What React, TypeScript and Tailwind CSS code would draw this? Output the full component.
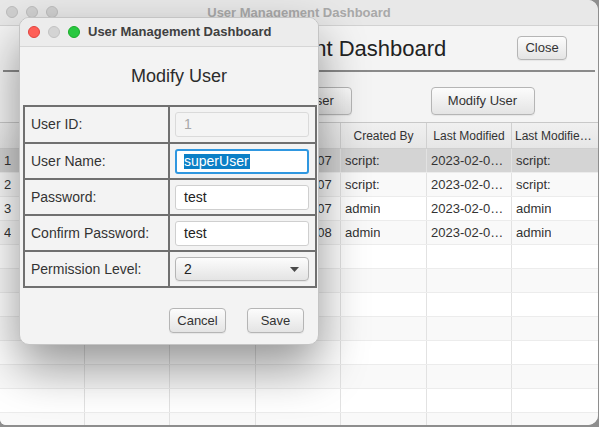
import React from 'react';

const rows = [
    { id: '1', name: 'superUser', pw: 'test', created: '2023-02-07', by: 'script:', mod: '2023-02-07 10:14', modBy: 'script:' },
    { id: '2', name: 'admin', pw: 'admin', created: '2023-02-07', by: 'script:', mod: '2023-02-07 10:14', modBy: 'script:' },
    { id: '3', name: 'jsmith', pw: 'pass', created: '2023-02-07', by: 'admin', mod: '2023-02-07 11:02', modBy: 'admin' },
    { id: '4', name: 'mdoe', pw: 'pass', created: '2023-02-08', by: 'admin', mod: '2023-02-08 09:30', modBy: 'admin' },
];

const headers = ['ID', 'User Name', 'Password', 'Created', 'Created By', 'Last Modified', 'Last Modified By'];

const btn = 'rounded-[4px] border border-[#b5b5b5] bg-linear-to-b from-[#fcfcfc] to-[#e4e4e4] text-[13px] text-[#333] shadow-[0_1px_1px_rgba(0,0,0,0.06)]';

function Dot({ color }: { color: string }) {
    return <span className={`block w-[12px] h-[12px] rounded-full ${color}`} />;
}

function Field({ children, className = '' }: { children: React.ReactNode; className?: string }) {
    return (
        <div className={`h-[25px] w-[134px] rounded-[3px] flex items-center pl-[8px] text-[14px] ${className}`}>
            {children}
        </div>
    );
}

function ModifyDialog() {
    const labelCls = 'border-r-2 border-[#707070] flex items-center pl-[6px] text-[14px] text-[#333]';
    const valueCls = 'flex items-center pl-[5px]';
    return (
        <div className="absolute left-[19px] top-[17px] w-[300px] h-[328px] rounded-[10px] bg-[#f3f3f3] border border-[#c4c4c4] shadow-[0_22px_48px_rgba(0,0,0,0.42)] overflow-hidden flex flex-col">
            {/* title bar */}
            <div className="h-[29px] shrink-0 flex items-center bg-[#ececec] border-b border-[#d6d6d6]">
                <div className="flex items-center gap-[8px] pl-[8px]">
                    <Dot color="bg-[#fe5f57] border border-[#e0443e]" />
                    <Dot color="bg-[#d4d4d4] border border-[#c2c2c2]" />
                    <Dot color="bg-[#28c840] border border-[#1aab29]" />
                </div>
                <span className="ml-[8px] text-[13px] font-bold text-[#404040]">User Management Dashboard</span>
            </div>

            <div className="h-[58px] shrink-0 flex items-center justify-center pl-[20px] text-[18px] text-[#2b2b2b]">
                Modify User
            </div>

            {/* form grid */}
            <div className="ml-[3px] w-[294px] border-2 border-[#707070] grid grid-cols-[145px_1fr] grid-rows-[35px_36px_36px_36px_36px]">
                <div className={labelCls}>User ID:</div>
                <div className={valueCls}>
                    <Field className="bg-[#f4f4f4] border border-[#dadada] text-[#a8a8a8]">1</Field>
                </div>

                <div className={`${labelCls} border-t-2`}>User Name:</div>
                <div className={`${valueCls} border-t-2 border-[#707070]`}>
                    <Field className="bg-white border-2 border-[#2f97e0] !pl-[7px]">
                        <span className="bg-[#0b7fc6] text-white leading-[15px] pr-[1px]">superUser</span>
                    </Field>
                </div>

                <div className={`${labelCls} border-t-2`}>Password:</div>
                <div className={`${valueCls} border-t-2 border-[#707070]`}>
                    <Field className="bg-white border border-[#cfcfcf] text-[#222]">test</Field>
                </div>

                <div className={`${labelCls} border-t-2`}>Confirm Password:</div>
                <div className={`${valueCls} border-t-2 border-[#707070]`}>
                    <Field className="bg-white border border-[#cfcfcf] text-[#222]">test</Field>
                </div>

                <div className={`${labelCls} border-t-2`}>Permission Level:</div>
                <div className={`${valueCls} border-t-2 border-[#707070]`}>
                    <Field className={`${btn} !text-[14px] !rounded-[4px] justify-between pr-[9px] !h-[24px]`}>
                        <span className="text-[#222]">2</span>
                        <svg width="9" height="5" viewBox="0 0 9 5"><path d="M0 0 L9 0 L4.5 5 Z" fill="#4a4a4a" /></svg>
                    </Field>
                </div>
            </div>

            <div className="flex justify-end gap-[21px] pr-[14px] pt-[20px]">
                <button className={`${btn} w-[57px] h-[25px]`}>Cancel</button>
                <button className={`${btn} w-[57px] h-[25px]`}>Save</button>
            </div>
        </div>
    );
}

export default function App() {
    const allRows = [...rows, ...Array.from({ length: 9 }, () => null)];

    return (
        <div className="relative w-[599px] h-[427px] bg-[#8e8e8e] overflow-hidden" style={{ fontFamily: '"Liberation Sans", Arial, sans-serif' }}>
            <div className="w-[598px] h-[425px] bg-[#f4f4f4] rounded-tr-[10px] rounded-br-[10px] rounded-bl-[6px] overflow-hidden flex flex-col">
                {/* window title bar */}
                <div className="h-[26px] shrink-0 relative flex items-center justify-center bg-[#e8e8e8] border-b border-[#d2d2d2]">
                    <div className="absolute left-[6px] top-[6px] flex gap-[8px]">
                        <Dot color="bg-[#d0d0d0] border border-[#bdbdbd]" />
                        <Dot color="bg-[#d0d0d0] border border-[#bdbdbd]" />
                        <Dot color="bg-[#d0d0d0] border border-[#bdbdbd]" />
                    </div>
                    <span className="text-[13px] font-bold text-[#a9a9a9]">User Management Dashboard</span>
                </div>

                {/* header */}
                <div className="h-[44px] shrink-0 grid grid-cols-[1fr_auto_1fr] items-center">
                    <div />
                    <div className="text-[22px] text-[#222]">User Management Dashboard</div>
                    <div className="flex justify-end pr-[31px]">
                        <button className={`${btn} w-[50px] h-[24px]`}>Close</button>
                    </div>
                </div>
                <div className="h-[2px] shrink-0 mx-[3px] bg-[#8a8a8a]" />

                {/* actions */}
                <div className="shrink-0 flex justify-center gap-[79px] pt-[15px] pb-[7px] pl-[1px]">
                    <button className={`${btn} w-[104px] h-[28px]`}>Add User</button>
                    <button className={`${btn} w-[104px] h-[28px]`}>Delete User</button>
                    <button className={`${btn} w-[104px] h-[28px]`}>Modify User</button>
                </div>

                {/* table */}
                <div className="flex-1 border-t border-[#c8c8c8]">
                    <div className="grid grid-cols-[85px_85px_86px_85px_86px_85px_86px] h-[26px] bg-linear-to-b from-[#f0f0f0] to-[#e6e6e6] border-b border-[#cfcfcf]">
                        {headers.map((h, i) => (
                            <div key={h} className={`flex items-center justify-center px-[3px] text-[12px] text-[#333] whitespace-nowrap overflow-hidden ${i < 6 ? 'border-r border-[#d0d0d0]' : ''}`}>
                                <span className="truncate">{h}</span>
                            </div>
                        ))}
                    </div>
                    {allRows.map((r, idx) => {
                        const bg = idx === 0 ? 'bg-[#d4d4d4]' : idx % 2 === 1 ? 'bg-[#f9f9f9]' : 'bg-white';
                        const cells = r ? [r.id, r.name, r.pw, r.created, r.by, r.mod, r.modBy] : ['', '', '', '', '', '', ''];
                        return (
                            <div key={idx} className={`grid grid-cols-[85px_85px_86px_85px_86px_85px_86px] h-[24px] ${bg} border-b border-[#ececec]`}>
                                {cells.map((c, i) => (
                                    <div key={i} className={`flex items-center pl-[4px] pr-[3px] text-[13px] text-[#333] whitespace-nowrap overflow-hidden ${i === 3 ? 'justify-center' : ''} ${i < 6 ? 'border-r border-[#e2e2e2]' : ''}`}>
                                        <span className="truncate">{c}</span>
                                    </div>
                                ))}
                            </div>
                        );
                    })}
                </div>
            </div>

            <ModifyDialog />
        </div>
    );
}
